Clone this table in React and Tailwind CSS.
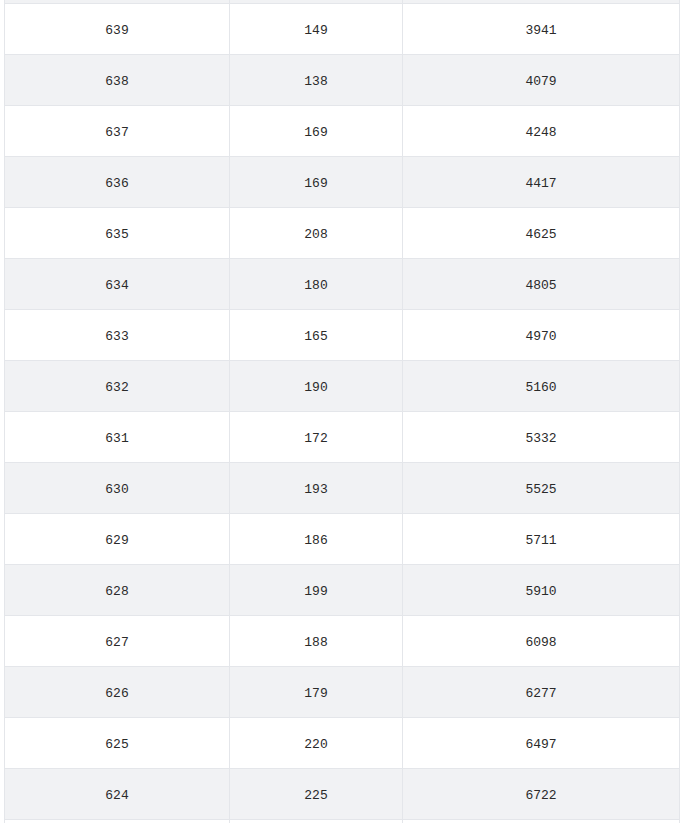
const rows = [
  ["", "", ""],
  [639, 149, 3941],
  [638, 138, 4079],
  [637, 169, 4248],
  [636, 169, 4417],
  [635, 208, 4625],
  [634, 180, 4805],
  [633, 165, 4970],
  [632, 190, 5160],
  [631, 172, 5332],
  [630, 193, 5525],
  [629, 186, 5711],
  [628, 199, 5910],
  [627, 188, 6098],
  [626, 179, 6277],
  [625, 220, 6497],
  [624, 225, 6722],
  ["", "", ""],
];

export default function App() {
  return (
    <div className="w-[683px] h-[823px] overflow-hidden bg-white">
      <div
        className="ml-[4px] -mt-[47px] w-[676px] border-l border-r border-[#e4e6ea] text-[13px] text-[#2a2a2a]"
        style={{ fontFamily: '"Liberation Mono", "DejaVu Sans Mono", monospace' }}
      >
        {rows.map((r, i) => (
          <div
            key={i}
            className={`flex h-[51px] border-b border-[#e4e6ea] ${i % 2 === 0 ? "bg-[#f1f2f4]" : "bg-white"}`}
          >
            <div className="w-[225px] shrink-0 border-r border-[#e4e6ea] flex items-center justify-center pt-[4px]">
              {r[0]}
            </div>
            <div className="w-[173px] shrink-0 border-r border-[#e4e6ea] flex items-center justify-center pt-[4px]">
              {r[1]}
            </div>
            <div className="flex-1 flex items-center justify-center pt-[4px]">{r[2]}</div>
          </div>
        ))}
      </div>
    </div>
  );
}
